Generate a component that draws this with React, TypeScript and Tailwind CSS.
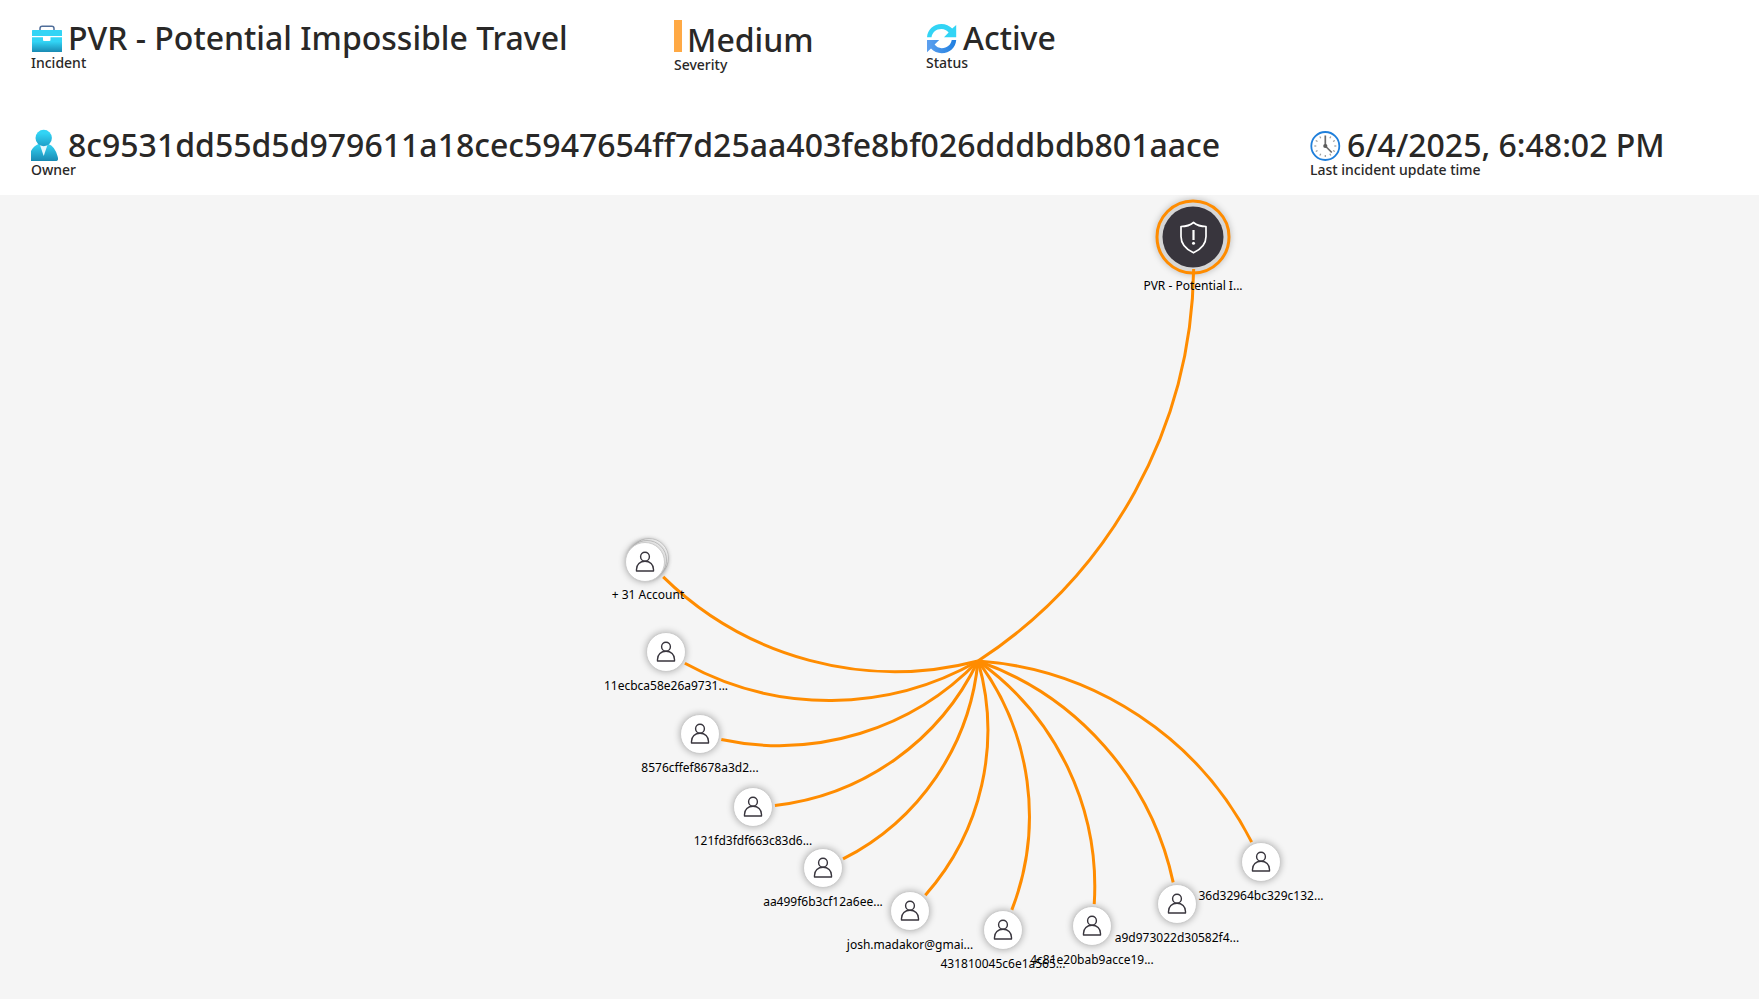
import type { ReactNode } from 'react';

type Point = { x: number; y: number };
type Entity = Point & { label: string; grouped?: boolean };

const ROOT: Point = { x: 1193, y: 42 };
const HUB: Point = { x: 978, y: 466 };

const ENTITIES: Entity[] = [
  { x: 648, y: 366, label: '+ 31 Account', grouped: true },
  { x: 666, y: 457, label: '11ecbca58e26a9731...' },
  { x: 700, y: 539, label: '8576cffef8678a3d2...' },
  { x: 753, y: 612, label: '121fd3fdf663c83d6...' },
  { x: 823, y: 673, label: 'aa499f6b3cf12a6ee...' },
  { x: 910, y: 716, label: 'josh.madakor@gmai...' },
  { x: 1003, y: 735, label: '431810045c6e1a565...' },
  { x: 1092, y: 731, label: '4c81e20bab9acce19...' },
  { x: 1177, y: 709, label: 'a9d973022d30582f4...' },
  { x: 1261, y: 667, label: '36d32964bc329c132...' },
];

/** Clockwise arc with its radius given as a share of the chord, trimmed at one end to stop at the node's rim. */
function arcPath(from: Point, to: Point, trim: number, trimStart: boolean, share: number) {
  const dx = to.x - from.x;
  const dy = to.y - from.y;
  const radius = Math.hypot(dx, dy) * share;
  const rise = Math.sqrt(share * share - 0.25);
  const cx = (from.x + to.x) / 2 - dy * rise;
  const cy = (from.y + to.y) / 2 + dx * rise;
  const turn = (p: Point, angle: number): Point => ({
    x: cx + (p.x - cx) * Math.cos(angle) - (p.y - cy) * Math.sin(angle),
    y: cy + (p.x - cx) * Math.sin(angle) + (p.y - cy) * Math.cos(angle),
  });
  const a = trimStart ? turn(from, trim / radius) : from;
  const b = trimStart ? to : turn(to, -trim / radius);
  return `M${a.x} ${a.y}A${radius} ${radius} 0 0 1 ${b.x} ${b.y}`;
}

function BriefcaseIcon() {
  return (
    <svg className="size-8 shrink-0" viewBox="0 0 32 32" aria-hidden="true">
      <defs>
        <linearGradient id="bag" x1="0" y1="0" x2="0" y2="1">
          <stop offset="0.3" stopColor="#32d4f5" />
          <stop offset="1" stopColor="#198ab3" />
        </linearGradient>
      </defs>
      <path d="M9 8.500V6.500Q9 4.300 11.200 4.300H20.800Q23 4.300 23 6.500V8.500" fill="none" stroke="#4f6d99" strokeWidth="1.500" />
      <path d="M1.500 8H30.500Q31 8 31 8.500V14H1V8.500Q1 8 1.500 8Z" fill="#32d4f5" />
      <path d="M1 15.200H12V18Q12 19 13 19H18.500Q19.500 19 19.500 18V15.200H31V29.500Q31 30 30.500 30H1.500Q1 30 1 29.500Z" fill="url(#bag)" />
    </svg>
  );
}

function OwnerIcon() {
  return (
    <svg className="size-8 shrink-0" viewBox="0 0 32 32" aria-hidden="true">
      <defs>
        <linearGradient id="head" x1="0" y1="0" x2="0" y2="1">
          <stop offset="0.2" stopColor="#32d4f5" />
          <stop offset="1" stopColor="#1f9fc8" />
        </linearGradient>
        <linearGradient id="torso" x1="0" y1="0" x2="0" y2="1">
          <stop offset="0.1" stopColor="#32cdee" />
          <stop offset="1" stopColor="#198ab3" />
        </linearGradient>
      </defs>
      <path d="M0 32V22Q2.500 17 7.500 15H17.500Q23.500 17 26.500 27Q28 31.500 25.500 32Z" fill="url(#torso)" />
      <path d="M8.800 15.500H16.600L12.700 27Z" fill="#e6f8fd" />
      <circle cx="12.700" cy="9" r="8.200" fill="url(#head)" />
    </svg>
  );
}

function RefreshIcon() {
  return (
    <svg className="size-8 shrink-0" viewBox="0 0 32 32" aria-hidden="true">
      <defs>
        <linearGradient id="lower" x1="0" y1="0" x2="1" y2="0">
          <stop offset="0" stopColor="#5ea0ef" />
          <stop offset="1" stopColor="#1f7fe0" />
        </linearGradient>
      </defs>
      <path d="M1 15.200C1.500 7.500 7.500 2 15.500 2C19.700 2 23.500 3.700 26.200 6.600L30.200 3V15.200H18L22.600 10.600C20.800 8.300 18.400 7 15.500 7C10 7 6.300 10.500 5.500 15.200Z" fill="#32d4f5" />
      <path d="M30.200 18C29.700 25.800 23.700 31.200 15.700 31.200C11.500 31.200 7.700 29.500 5 26.600L1 30.200V18H13.200L8.600 22.600C10.400 24.900 12.800 26.200 15.700 26.200C21.200 26.200 24.900 22.700 25.700 18Z" fill="url(#lower)" />
    </svg>
  );
}

function ClockIcon() {
  return (
    <svg className="size-8 shrink-0" viewBox="0 0 32 32" aria-hidden="true">
      <circle cx="15.300" cy="17" r="14" fill="#fff" stroke="#1f7fdb" strokeWidth="1.800" />
      <g stroke="#9a9a9a" strokeWidth="1.200">
        {[30, 60, 90, 120, 150, 180, 210, 240, 270, 300, 330].map((angle) => (
          <path key={angle} d="M15.300 6V8" transform={`rotate(${angle} 15.300 17)`} />
        ))}
      </g>
      <path d="M15.300 6.500V17L21.800 23.500" fill="none" stroke="#6b6b6b" strokeWidth="1.700" />
      <circle cx="15.300" cy="17" r="2.100" fill="#5c5c5c" />
    </svg>
  );
}

function Fact({ icon, value, label, className = '', lineClass = 'h-[34px]' }: {
  icon: ReactNode;
  value: string;
  label: string;
  className?: string;
  lineClass?: string;
}) {
  return (
    <div className={`flex shrink-0 flex-col-reverse justify-end whitespace-nowrap ${className}`}>
      <dt className="text-sm leading-[18px] font-medium">{label}</dt>
      <dd className={`flex items-end gap-[5px] text-[32px] leading-8 font-medium ${lineClass}`}>
        {icon}
        {value}
      </dd>
    </div>
  );
}

function AccountCircle({ x, y, withIcon = true }: Point & { withIcon?: boolean }) {
  return (
    <div
      className={`absolute flex size-10 -translate-x-1/2 -translate-y-1/2 items-center justify-center rounded-full border border-[#cccccc] bg-white ${
        withIcon ? 'shadow-[0_0_7px_rgba(0,0,0,0.3)]' : 'shadow-[0_0_4px_rgba(0,0,0,0.15)]'
      }`}
      style={{ left: x, top: y }}
    >
      {withIcon && (
        <svg className="size-6" viewBox="-12 -12 24 24" fill="none" stroke="#38353d" strokeWidth="1.400" aria-hidden="true">
          <circle cx="0" cy="-5.300" r="4.400" />
          <path d="M-8.500 9V7.500C-8.500 2.700 -5 -0.700 0 -0.700S8.500 2.700 8.500 7.500V9Z" strokeLinejoin="round" />
        </svg>
      )}
    </div>
  );
}

function NodeLabel({ x, y, children }: Point & { children: ReactNode }) {
  return (
    <span className="absolute -translate-x-1/2 text-xs leading-4 whitespace-nowrap text-black" style={{ left: x, top: y }}>
      {children}
    </span>
  );
}

export default function App() {
  return (
    <div className="flex min-h-screen flex-col bg-white font-['Noto_Sans',sans-serif] text-[#292827]">
      <header className="pt-5 pb-4 pl-[31px]">
        <dl className="flex">
          <Fact className="w-[643px]" icon={<BriefcaseIcon />} value="PVR - Potential Impossible Travel" label="Incident" />
          <Fact
            className="w-[252px]"
            lineClass="h-9"
            icon={<span className="h-8 w-2 self-start bg-[#ffa944]" />}
            value="Medium"
            label="Severity"
          />
          <Fact icon={<RefreshIcon />} value="Active" label="Status" />
        </dl>
        <dl className="mt-[53px] flex">
          <Fact
            className="w-[1279px]"
            icon={<OwnerIcon />}
            value="8c9531dd55d5d979611a18cec5947654ff7d25aa403fe8bf026dddbdb801aace"
            label="Owner"
          />
          <Fact icon={<ClockIcon />} value="6/4/2025, 6:48:02 PM" label="Last incident update time" />
        </dl>
      </header>

      <main className="relative min-h-[800px] flex-1 overflow-hidden bg-[#f5f5f5]">
        <div
          className="absolute flex size-[75px] -translate-x-1/2 -translate-y-1/2 items-center justify-center rounded-full border-3 border-[#ff8c00] bg-[#d6d6d6] shadow-[0_0_7px_rgba(0,0,0,0.25)]"
          style={{ left: ROOT.x, top: ROOT.y }}
        >
          <div className="flex size-[61px] items-center justify-center rounded-full bg-[#38353d]">
            <svg className="size-9" viewBox="-18 -18 36 36" fill="none" stroke="#fff" strokeWidth="1.700" aria-hidden="true">
              <path d="M0 -15C-3.500 -12 -7.500 -11 -12.500 -11V-1C-12.500 7 -7 12 0 15.300C7 12 12.500 7 12.500 -1V-11C7.500 -11 3.500 -12 0 -15Z" strokeLinejoin="round" />
              <path d="M0 -7.500V2.500" strokeWidth="2.200" />
              <circle cx="0" cy="5.700" r="1.500" fill="#fff" stroke="none" />
            </svg>
          </div>
        </div>

        {ENTITIES.map((entity) =>
          entity.grouped ? (
            <div key={entity.label}>
              <AccountCircle x={entity.x + 1} y={entity.y - 3} withIcon={false} />
              <AccountCircle x={entity.x - 1} y={entity.y - 1} withIcon={false} />
              <AccountCircle x={entity.x - 3} y={entity.y + 1} />
            </div>
          ) : (
            <AccountCircle key={entity.label} x={entity.x} y={entity.y} />
          ),
        )}

        <svg className="pointer-events-none absolute inset-0 size-full" fill="none" stroke="#ff8c00" strokeWidth="3" aria-hidden="true">
          <path d={arcPath(ROOT, HUB, 32, true, 1)} />
          {ENTITIES.map((entity) => (
            <path key={entity.label} d={arcPath(HUB, entity, 22, false, 0.96)} />
          ))}
        </svg>

        <NodeLabel x={ROOT.x} y={ROOT.y + 41}>PVR - Potential I...</NodeLabel>
        {ENTITIES.map((entity) => (
          <NodeLabel key={entity.label} x={entity.x} y={entity.y + 26}>
            {entity.label}
          </NodeLabel>
        ))}
      </main>
    </div>
  );
}
